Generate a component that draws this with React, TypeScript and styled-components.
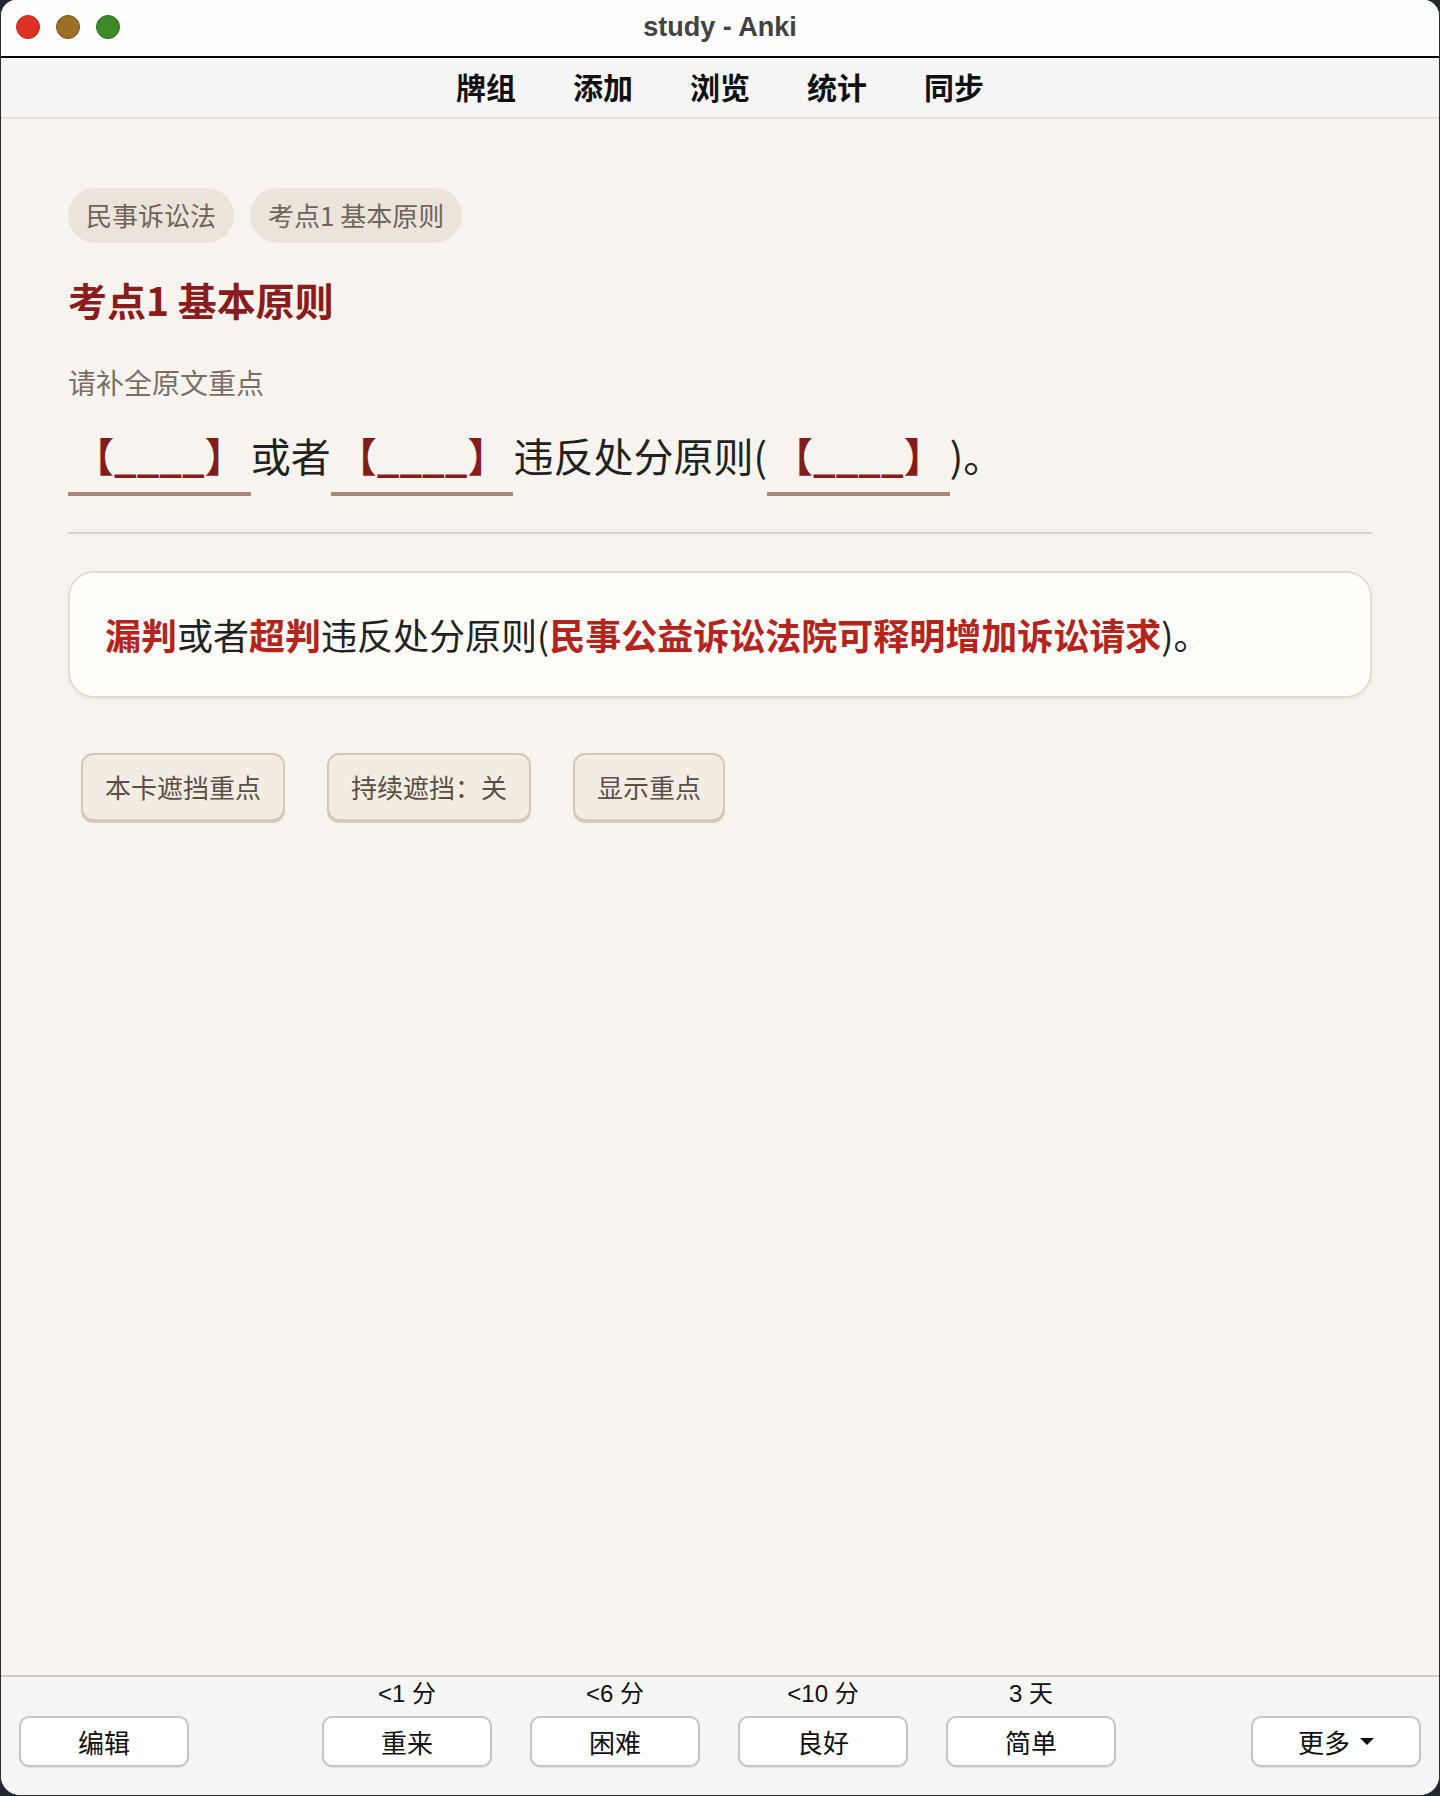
import React from 'react';
import styled, { createGlobalStyle } from 'styled-components';

const GlobalStyle = createGlobalStyle`
  html, body {
    margin: 0;
    padding: 0;
    background: #1d2833;
  }
  body {
    font-family: "Noto Sans CJK SC", "Liberation Sans", sans-serif;
    text-spacing-trim: space-all;
  }
  * {
    box-sizing: border-box;
  }
`;

const Window = styled.div`
  width: 1440px;
  height: 1796px;
  display: flex;
  flex-direction: column;
  border-radius: 16px 16px 20px 20px;
  overflow: hidden;
  border: 1px solid #2b2b2b;
  border-top: none;
  background: #f7f4ef;
`;

const TitleBar = styled.div`
  height: 58px;
  flex: none;
  display: grid;
  grid-template-columns: 1fr auto 1fr;
  align-items: center;
  background: #fdfdfd;
  border-bottom: 2px solid #000;
  padding-bottom: 2px;
`;

const Lights = styled.div`
  display: flex;
  gap: 16px;
  padding-left: 15px;
`;

const Light = styled.span<{ $fill: string; $edge: string }>`
  width: 24px;
  height: 24px;
  border-radius: 50%;
  background: ${(p) => p.$fill};
  border: 1px solid ${(p) => p.$edge};
`;

const Title = styled.div`
  font-family: "Liberation Sans", "Noto Sans CJK SC", sans-serif;
  font-weight: 700;
  font-size: 27px;
  color: #424242;
`;

const NavBar = styled.nav`
  height: 61px;
  flex: none;
  display: flex;
  justify-content: center;
  align-items: center;
  gap: 57px;
  padding-bottom: 4px;
  background: #f5f5f5;
  border-bottom: 2px solid #e2e2e2;
`;

const NavItem = styled.span`
  font-size: 30px;
  font-weight: 700;
  color: #111;
`;

const Main = styled.main`
  flex: 1;
  padding: 69px 67px 0 67px;
  display: flex;
  flex-direction: column;
  align-items: stretch;
`;

const Tags = styled.div`
  display: flex;
  gap: 16px;
`;

const Tag = styled.span`
  font-size: 26px;
  line-height: 36.4px;
  padding: 9.3px 18px;
  border-radius: 30px;
  background: #ebe4da;
  color: #6e645b;
`;

const Heading = styled.h1`
  margin: 30px 0 0;
  font-size: 39px;
  line-height: 52px;
  font-weight: 700;
  color: #8a1c1c;
`;

const Hint = styled.div`
  margin-top: 38px;
  font-size: 28px;
  line-height: 39.2px;
  color: #7a6f65;
`;

const ClozeLine = styled.div`
  margin-top: 21px;
  font-size: 40px;
  line-height: 64px;
  color: #222;
`;

const Blank = styled.span`
  padding: 0 6px 8px;
  border-bottom: 4px solid #a78875;
  color: #851c1c;
  font-weight: 700;
`;

const Divider = styled.hr`
  margin: 45px 0 0;
  border: none;
  height: 2px;
  background: #ddd3c7;
`;

const AnswerBox = styled.div`
  margin-top: 37px;
  padding: 33px 35px;
  font-size: 36px;
  line-height: 57px;
  color: #222;
  background: #fefdf9;
  border: 2px solid #e6ddd1;
  border-radius: 26px;
  box-shadow: 0 2px 4px rgba(120, 100, 80, 0.08);
`;

const Mark = styled.span`
  color: #b4241d;
  font-weight: 700;
`;

const ToolRow = styled.div`
  margin: 55px 0 0 13px;
  display: flex;
  gap: 42px;
`;

const ToolButton = styled.button`
  font-family: inherit;
  font-size: 26px;
  line-height: 39px;
  padding: 12px 22px 13px;
  color: #5a4f46;
  background: #f3ece3;
  border: 2px solid #d3c8bb;
  border-radius: 12px;
  box-shadow: 0 2px 0 #d6ccc0;
`;

const BottomBar = styled.footer`
  height: 120px;
  flex: none;
  display: grid;
  grid-template-columns: 170px 1fr 170px;
  align-items: start;
  padding: 2px 18px 0 18px;
  background: #f5f5f5;
  border-top: 2px solid #c9c9c9;
`;

const AnswerGroup = styled.div`
  display: flex;
  justify-content: center;
  gap: 38px;
  margin-left: -2px;
`;

const AnswerCol = styled.div`
  display: flex;
  flex-direction: column;
  align-items: center;
`;

const Due = styled.span`
  font-family: "Liberation Sans", "Noto Sans CJK SC", sans-serif;
  font-size: 24px;
  line-height: 30px;
  margin-bottom: 7px;
  color: #111;
`;

const BarButton = styled.button<{ $offset?: boolean }>`
  width: 170px;
  height: 51px;
  margin-top: ${(p) => (p.$offset ? '37px' : '0')};
  display: flex;
  justify-content: center;
  align-items: center;
  gap: 10px;
  font-family: inherit;
  font-size: 26px;
  color: #111;
  background: #fff;
  border: 2px solid #c6c6c6;
  border-radius: 10px;
  box-shadow: 0 1px 1px rgba(0, 0, 0, 0.08);
`;

const Caret = () => (
  <svg width="14" height="8" viewBox="0 0 14 8">
    <path d="M0 0 L14 0 L7 7 Z" fill="#111" />
  </svg>
);

const navItems = ['牌组', '添加', '浏览', '统计', '同步'];
const answers = [
  { due: '<1 分', label: '重来' },
  { due: '<6 分', label: '困难' },
  { due: '<10 分', label: '良好' },
  { due: '3 天', label: '简单' },
];

export default function App() {
  return (
    <>
      <GlobalStyle />
      <Window>
        <TitleBar>
          <Lights>
            <Light $fill="#df3026" $edge="#c0281f" />
            <Light $fill="#9b7026" $edge="#7a5318" />
            <Light $fill="#3b8b28" $edge="#2e6d1e" />
          </Lights>
          <Title>study - Anki</Title>
          <span />
        </TitleBar>
        <NavBar>
          {navItems.map((n) => (
            <NavItem key={n}>{n}</NavItem>
          ))}
        </NavBar>
        <Main>
          <Tags>
            <Tag>民事诉讼法</Tag>
            <Tag>考点1 基本原则</Tag>
          </Tags>
          <Heading>考点1 基本原则</Heading>
          <Hint>请补全原文重点</Hint>
          <ClozeLine>
            <Blank>【____】</Blank>或者<Blank>【____】</Blank>违反处分原则(<Blank>【____】</Blank>)。
          </ClozeLine>
          <Divider />
          <AnswerBox>
            <Mark>漏判</Mark>或者<Mark>超判</Mark>违反处分原则(<Mark>民事公益诉讼法院可释明增加诉讼请求</Mark>)。
          </AnswerBox>
          <ToolRow>
            <ToolButton>本卡遮挡重点</ToolButton>
            <ToolButton>持续遮挡：关</ToolButton>
            <ToolButton>显示重点</ToolButton>
          </ToolRow>
        </Main>
        <BottomBar>
          <BarButton $offset>编辑</BarButton>
          <AnswerGroup>
            {answers.map((a) => (
              <AnswerCol key={a.label}>
                <Due>{a.due}</Due>
                <BarButton>{a.label}</BarButton>
              </AnswerCol>
            ))}
          </AnswerGroup>
          <BarButton $offset>
            更多
            <Caret />
          </BarButton>
        </BottomBar>
      </Window>
    </>
  );
}
